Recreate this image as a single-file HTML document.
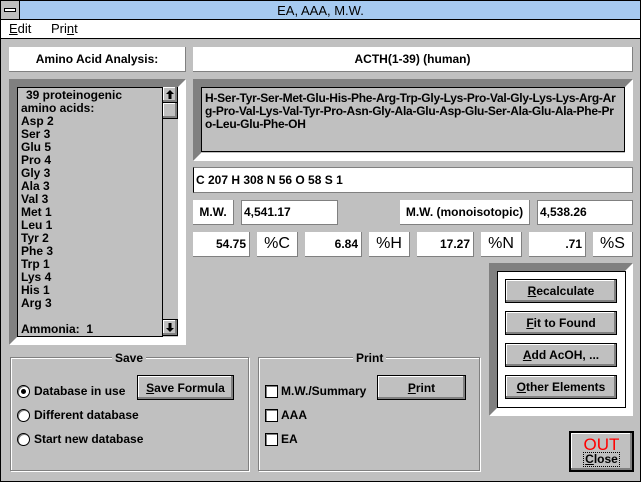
<!DOCTYPE html>
<html><head><style>
*{margin:0;padding:0;box-sizing:border-box}
body{width:641px;height:482px;background:#c0c0c0;font-family:"Liberation Sans",sans-serif;font-size:12px;font-weight:bold;color:#000;position:relative;overflow:hidden}
.a{position:absolute}
.w{background:#fff;border-right:1px solid #808080;border-bottom:1px solid #808080}
.c{display:flex;align-items:center;justify-content:center}
.bev{border-style:solid;border-width:8px;border-color:#808080 #fff #fff #808080}
.btn{background:#c0c0c0;border:1px solid #000;box-shadow:inset -2px -2px 0 #808080,inset 1px 1px 0 #fff;display:flex;align-items:center;justify-content:center}
.grp{border:1px solid #808080;box-shadow:1px 1px 0 #fff, inset 1px 1px 0 #fff}
.rad{width:13px;height:13px;border-radius:50%;background:#fff;border:1px solid #000;box-shadow:inset 1px 1px 0 #808080}
.chk{width:13px;height:13px;background:#fff;border:1px solid #000;box-shadow:inset 1px 1px 0 #808080}
</style></head><body>
<div class="a" style="left:0;top:0;width:641px;height:482px;border:1px solid #000"></div>
<div class="a c" style="left:0;top:0;width:641px;height:20px;background:#a6caf0;border:1px solid #000;font-weight:normal;font-size:13px">EA, AAA, M.W.</div>
<div class="a" style="left:0;top:0;width:20px;height:20px;background:#c0c0c0;border:1px solid #000"><div class="a" style="left:3px;top:7px;width:12px;height:4px;background:#fff;border:1px solid #000"></div></div>
<div class="a" style="left:1px;top:20px;width:639px;height:19px;background:#fff;border-bottom:1px solid #000;font-weight:normal;font-size:13px">
<span class="a" style="left:8px;top:1px"><u>E</u>dit</span><span class="a" style="left:50px;top:1px">Pri<u>n</u>t</span></div>

<div class="a w c" style="left:9px;top:47px;width:177px;height:25px">Amino Acid Analysis:</div>
<div class="a w c" style="left:193px;top:47px;width:440px;height:25px">ACTH(1-39) (human)</div>

<div class="a bev" style="left:9px;top:79px;width:177px;height:266px"></div>
<div class="a" style="left:17px;top:87px;width:161px;height:250px;border:1px solid #000;background:#c0c0c0;line-height:13px;padding:1px 0 0 3px">
<div style="padding-left:5px">39 proteinogenic</div><div>amino acids:</div><div>Asp 2</div><div>Ser 3</div><div>Glu 5</div><div>Pro 4</div><div>Gly 3</div><div>Ala 3</div><div>Val 3</div><div>Met 1</div><div>Leu 1</div><div>Tyr 2</div><div>Phe 3</div><div>Trp 1</div><div>Lys 4</div><div>His 1</div><div>Arg 3</div><div>&nbsp;</div><div>Ammonia:&nbsp; 1</div>
<div class="a" style="left:144px;top:-1px;width:16px;height:250px;border-left:1px solid #000;background:#c0c0c0">
<div class="a btn" style="left:-1px;top:0;width:16px;height:16px;border-top:none"><svg width="8" height="9" viewBox="0 0 8 9"><path d="M4 0L8 4H5.5V9H2.5V4H0Z" fill="#000"/></svg></div>
<div class="a btn" style="left:-1px;top:15px;width:16px;height:17px"></div>
<div class="a btn" style="left:-1px;top:232px;width:16px;height:17px"><svg width="8" height="9" viewBox="0 0 8 9"><path d="M4 9L8 5H5.5V0H2.5V5H0Z" fill="#000"/></svg></div></div>
</div>

<div class="a bev" style="left:193px;top:79px;width:440px;height:82px"></div>
<div class="a" style="left:201px;top:87px;width:424px;height:65px;border:1px solid #000;background:#c0c0c0;padding:4px 3px;line-height:13px;white-space:nowrap;letter-spacing:-0.25px;overflow:hidden">H-Ser-Tyr-Ser-Met-Glu-His-Phe-Arg-Trp-Gly-Lys-Pro-Val-Gly-Lys-Lys-Arg-Ar<br>g-Pro-Val-Lys-Val-Tyr-Pro-Asn-Gly-Ala-Glu-Asp-Glu-Ser-Ala-Glu-Ala-Phe-Pr<br>o-Leu-Glu-Phe-OH</div>

<div class="a w" style="left:193px;top:167px;width:440px;height:26px;border:1px solid #808080;border-left-color:#000;padding:5px 2px">C 207 H 308 N 56 O 58 S 1</div>

<div class="a w c" style="left:193px;top:200px;width:41px;height:25px">M.W.</div>
<div class="a w" style="left:241px;top:200px;width:97px;height:25px;border-left:1px solid #808080;border-top:1px solid #808080;padding:4px 2px">4,541.17</div>
<div class="a w c" style="left:400px;top:200px;width:130px;height:25px">M.W. (monoisotopic)</div>
<div class="a w" style="left:537px;top:200px;width:96px;height:25px;border-left:1px solid #808080;border-top:1px solid #808080;padding:4px 2px">4,538.26</div>

<div class="a w" style="left:193px;top:232px;width:57px;height:25px;text-align:right;padding:5px 3px">54.75</div>
<div class="a w c" style="left:257px;top:232px;width:41px;height:25px;font-weight:normal;font-size:16px">%C</div>
<div class="a w" style="left:305px;top:232px;width:57px;height:25px;text-align:right;padding:5px 3px">6.84</div>
<div class="a w c" style="left:369px;top:232px;width:41px;height:25px;font-weight:normal;font-size:16px">%H</div>
<div class="a w" style="left:417px;top:232px;width:57px;height:25px;text-align:right;padding:5px 3px">17.27</div>
<div class="a w c" style="left:481px;top:232px;width:41px;height:25px;font-weight:normal;font-size:16px">%N</div>
<div class="a w" style="left:529px;top:232px;width:57px;height:25px;text-align:right;padding:5px 3px">.71</div>
<div class="a w c" style="left:593px;top:232px;width:40px;height:25px;font-weight:normal;font-size:16px">%S</div>

<div class="a grp" style="left:10px;top:357px;width:239px;height:114px"></div>
<div class="a" style="left:112px;top:351px;background:#c0c0c0;padding:0 3px">Save</div>
<div class="a rad" style="left:17px;top:385px"><div class="a" style="left:3px;top:3px;width:5px;height:5px;border-radius:50%;background:#000"></div></div>
<div class="a" style="left:34px;top:384px">Database in use</div>
<div class="a rad" style="left:17px;top:409px"></div><div class="a" style="left:34px;top:408px">Different database</div>
<div class="a rad" style="left:17px;top:433px"></div><div class="a" style="left:34px;top:432px">Start new database</div>
<div class="a btn" style="left:137px;top:375px;width:97px;height:25px"><span><u>S</u>ave Formula</span></div>

<div class="a grp" style="left:258px;top:357px;width:222px;height:114px"></div>
<div class="a" style="left:353px;top:351px;background:#c0c0c0;padding:0 3px">Print</div>
<div class="a chk" style="left:265px;top:385px"></div><div class="a" style="left:281px;top:384px">M.W./Summary</div>
<div class="a chk" style="left:265px;top:409px"></div><div class="a" style="left:281px;top:408px">AAA</div>
<div class="a chk" style="left:265px;top:433px"></div><div class="a" style="left:281px;top:432px">EA</div>
<div class="a btn" style="left:377px;top:375px;width:89px;height:25px"><span><u>P</u>rint</span></div>

<div class="a bev" style="left:489px;top:263px;width:144px;height:153px"></div>
<div class="a" style="left:497px;top:271px;width:129px;height:137px;background:#fff;border:1px solid #000"></div>
<div class="a btn" style="left:505px;top:279px;width:112px;height:24px"><span><u>R</u>ecalculate</span></div>
<div class="a btn" style="left:505px;top:311px;width:112px;height:24px"><span><u>F</u>it to Found</span></div>
<div class="a btn" style="left:505px;top:343px;width:112px;height:24px"><span><u>A</u>dd AcOH, ...</span></div>
<div class="a btn" style="left:505px;top:375px;width:112px;height:24px"><span><u>O</u>ther Elements</span></div>

<div class="a btn" style="left:569px;top:431px;width:65px;height:41px;border:2px solid #000;flex-direction:column;line-height:13px">
<span style="color:#f00;font-weight:normal;font-size:17px;line-height:15px">OUT</span>
<span style="border:1px dotted #000;padding:0 1px"><u>C</u>lose</span></div>
</body></html>
